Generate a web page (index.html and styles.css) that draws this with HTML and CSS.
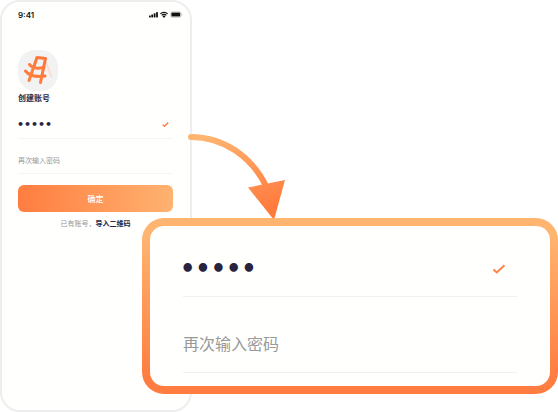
FILE: index.html
```html
<!DOCTYPE html>
<html lang="zh-CN">
<head>
<meta charset="utf-8">
<meta name="viewport" content="width=device-width, initial-scale=1">
<title>创建账号</title>
<link rel="stylesheet" href="styles.css">
</head>
<body>
<main class="scene">
  <section class="phone">
    <header class="status">
      <span class="time">9:41</span>
      <svg class="status-icons" width="34" height="8" viewBox="0 0 34 8" aria-hidden="true">
        <g fill="#111">
          <rect x="0" y="4.4" width="1.8" height="2" rx=".4"/>
          <rect x="2.3" y="3.4" width="1.8" height="3" rx=".4"/>
          <rect x="4.7" y="2.2" width="1.8" height="4.2" rx=".4"/>
          <rect x="7.1" y="1" width="1.8" height="5.4" rx=".4"/>
          <rect x="22.4" y="1.6" width="8.8" height="4" rx=".7"/>
          <path d="M15 6.9l-1.5-1.6a2 2 0 0 1 3 0z"/>
        </g>
        <path d="M11.4 2.9a5 5 0 0 1 7.2 0M12.7 4.3a3.2 3.2 0 0 1 4.6 0" fill="none" stroke="#111" stroke-width="1.2"/>
        <rect x="21.7" y=".9" width="10.2" height="5.4" rx="1.5" fill="none" stroke="#aaa" stroke-width=".6"/>
        <path d="M32.7 2.8v1.6" stroke="#aaa" stroke-width=".6"/>
      </svg>
    </header>
    <svg class="logo" width="41" height="41" viewBox="0 0 41 41" aria-hidden="true">
      <defs>
        <linearGradient id="logo-fill" x1="0" y1="1" x2="1" y2="0">
          <stop offset="0" stop-color="#ff823f"/>
          <stop offset="1" stop-color="#ff7138"/>
        </linearGradient>
      </defs>
      <rect width="40" height="41" rx="17" fill="#f3f2f2"/>
      <path d="M28.5 13L33.5 27" stroke="#ffd9c8" stroke-width="1.6" stroke-linecap="round"/>
      <g fill="none" stroke="url(#logo-fill)" stroke-width="3" stroke-linecap="round" stroke-linejoin="round">
        <path d="M19 7.500L11 30.500M19 7.500L27.500 8.500L22.500 32.500"/>
        <path d="M11.500 14.500Q16 20 26 17.500"/>
        <path d="M7.500 21Q13 28 27 26"/>
      </g>
    </svg>
    <h1 class="title">创建账号</h1>
    <form class="form">
      <div class="field">
        <input class="input" type="password" value="12345" aria-label="密码">
        <svg class="check" viewBox="0 0 14 10" aria-hidden="true"><path d="M1.5 5.4L4.8 8.4L12.5 1.3"/></svg>
      </div>
      <div class="field">
        <input class="input" type="password" placeholder="再次输入密码" aria-label="再次输入密码">
      </div>
      <button class="submit" type="button">确定</button>
      <p class="hint">已有账号，<a href="#import">导入二维码</a></p>
    </form>
  </section>

  <svg class="arrow" width="100" height="90" viewBox="0 0 100 90" aria-hidden="true">
    <defs>
      <linearGradient id="arrow-fill" gradientUnits="userSpaceOnUse" x1="30" y1="4" x2="58" y2="88">
        <stop offset="0" stop-color="#ffb470"/>
        <stop offset="1" stop-color="#ff7a3d"/>
      </linearGradient>
    </defs>
    <path d="M5 7C37 7 66 26 81 58" fill="none" stroke="url(#arrow-fill)" stroke-width="6" stroke-linecap="round"/>
    <path d="M62 57.5L99 50L88 90Z" fill="url(#arrow-fill)"/>
  </svg>

  <section class="callout">
    <div class="callout-body">
      <div class="field">
        <input class="input" type="password" value="12345" aria-label="密码">
        <svg class="check" viewBox="0 0 14 10" aria-hidden="true"><path d="M1.5 5.4L4.8 8.4L12.5 1.3"/></svg>
      </div>
      <div class="field">
        <input class="input" type="password" placeholder="再次输入密码" aria-label="再次输入密码">
      </div>
    </div>
  </section>
</main>
</body>
</html>
```

FILE: styles.css
```css
* {
  box-sizing: border-box;
}

body {
  margin: 0;
  background: #fff;
  font-family: "Noto Sans CJK SC", sans-serif;
}

.scene {
  position: relative;
  display: grid;
  grid-template-columns: minmax(192px, 34%) 1fr;
  min-height: 100vh;
}

.phone {
  padding: 8px 17px 16px 16px;
  border: 2px solid #eee;
  border-radius: 20px;
  background: #fffffd;
}

.status {
  display: flex;
  justify-content: space-between;
  align-items: center;
  height: 10px;
  margin-right: -10px;
}

.time {
  color: #111;
  font: 600 8px/10px Inter, sans-serif;
}

.logo {
  display: block;
  margin-top: 30px;
}

.title {
  margin: 1px 0 0;
  color: #25284a;
  font-size: 8px;
  font-weight: 700;
  line-height: 12px;
}

.form {
  margin: 0;
}

.field {
  display: flex;
  align-items: center;
  height: 35px;
  padding: 7px 4px 0 0;
  border-bottom: 1px solid #f6f6f6;
}

.input {
  flex: 1;
  min-width: 0;
  height: 20px;
  padding: 0;
  border: 0;
  outline: 0;
  background: none;
  color: #28243f;
  font: 700 11px/20px "DejaVu Sans", sans-serif;
  text-indent: -1px;
}

.input::placeholder {
  color: #999;
  font: 7px/20px "Noto Sans CJK SC", sans-serif;
  text-indent: 0;
}

.check {
  flex: none;
  width: 7px;
  height: 5px;
  fill: none;
  stroke: #ff8247;
  stroke-width: 3;
}

.submit {
  display: block;
  width: 100%;
  height: 27px;
  margin-top: 11px;
  padding: 0;
  border: 0;
  border-radius: 6px;
  background: linear-gradient(90deg, #ff7d40, #ffb270);
  color: #fff;
  font: 500 8px/27px "Noto Sans CJK SC", sans-serif;
}

.hint {
  margin: 5px 0 0;
  color: #999;
  font-size: 7px;
  line-height: 12px;
  text-align: center;
}

.hint a {
  color: #25284a;
  font-weight: 700;
  text-decoration: none;
}

.arrow {
  position: absolute;
  top: 130px;
  left: 186px;
}

.callout {
  position: absolute;
  top: 218px;
  right: 0;
  left: 142px;
  padding: 8px;
  border-radius: 22px;
  background: linear-gradient(#ffb470 10%, #ff7d40 90%);
}

.callout-body {
  padding: 0 33px 13px;
  border-radius: 14px;
  background: #fffffd;
}

.callout .field {
  height: 76px;
  padding: 15px 11px 0 0;
  border-color: #f0f0f0;
}

.callout .field:first-child {
  height: 71px;
}

.callout .input {
  height: 32px;
  font-size: 24px;
  line-height: 32px;
  text-indent: -3px;
}

.callout .input::placeholder {
  font-size: 16px;
  line-height: 32px;
  text-indent: 0;
}

.callout .check {
  width: 14px;
  height: 10px;
  stroke-width: 2;
}
```
